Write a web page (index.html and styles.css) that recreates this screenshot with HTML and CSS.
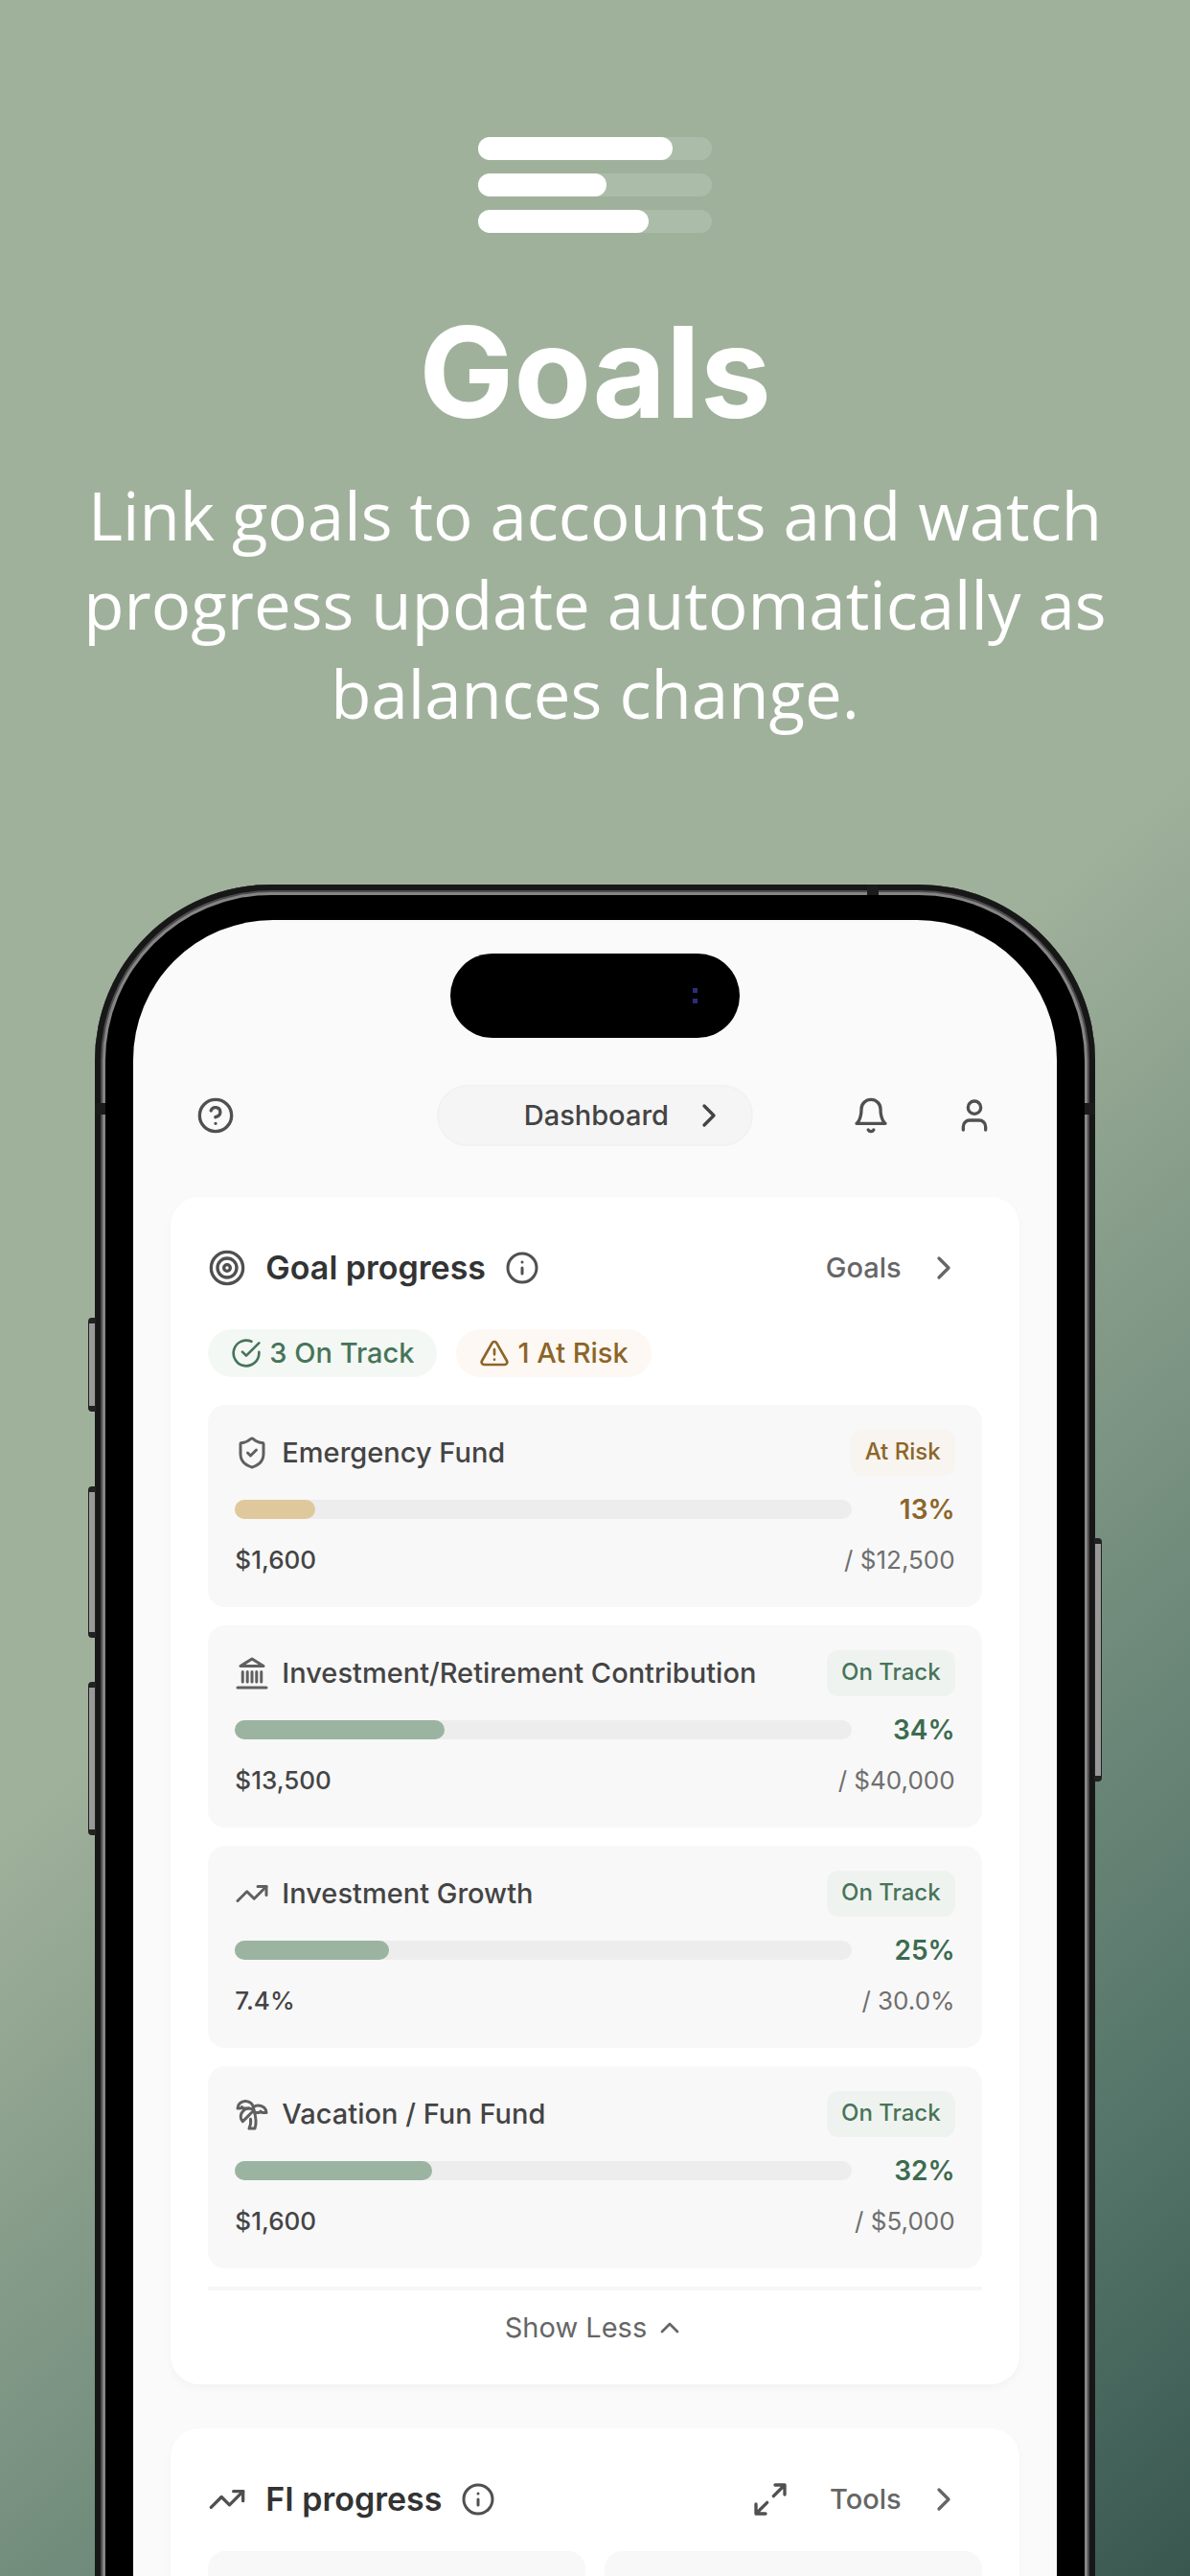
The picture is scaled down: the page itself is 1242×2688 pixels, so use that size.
FILE: index.html
```html
<!DOCTYPE html>
<html lang="en">

<head>
  <meta charset="UTF-8">
  <meta name="viewport" content="width=device-width, initial-scale=1.0">
  <title>Goals</title>
  <link rel="stylesheet" href="styles.css">
</head>

<body>
  <svg class="sprite" aria-hidden="true">
    <symbol id="chevron" viewBox="0 0 24 24"><path d="m9 18 6-6-6-6"/></symbol>
    <symbol id="info" viewBox="0 0 24 24"><circle cx="12" cy="12" r="10"/><path d="M12 16v-4M12 8h.01"/></symbol>
    <symbol id="trend" viewBox="0 0 24 24"><path d="m22 7-8.500 8.500-5-5L2 17"/><path d="M16 7h6v6"/></symbol>
  </svg>

  <header class="hero">
    <div class="logo">
      <span class="logo-bar"><span class="logo-fill long"></span></span>
      <span class="logo-bar"><span class="logo-fill short"></span></span>
      <span class="logo-bar"><span class="logo-fill medium"></span></span>
    </div>
    <h1>Goals</h1>
    <p>Link goals to accounts and watch progress update automatically as balances change.</p>
  </header>

  <div class="phone">
    <span class="side-button action"></span>
    <span class="side-button volume-up"></span>
    <span class="side-button volume-down"></span>
    <span class="side-button power"></span>
    <span class="antenna antenna-top"></span>
    <span class="antenna antenna-left"></span>
    <span class="antenna antenna-right"></span>

    <main class="screen">
      <div class="island"><span class="camera"></span></div>

      <nav class="topbar">
        <button class="icon-button" aria-label="Help">
          <svg class="icon" viewBox="0 0 24 24"><circle cx="12" cy="12" r="10"/><path d="M9.090 9a3 3 0 0 1 5.830 1c0 2-3 3-3 3M12 17h.01"/></svg>
        </button>
        <button class="page-switch">Dashboard
          <svg class="icon"><use href="#chevron"/></svg>
        </button>
        <div class="topbar-actions">
          <button class="icon-button" aria-label="Notifications">
            <svg class="icon" viewBox="0 0 24 24"><path d="M6 8a6 6 0 0 1 12 0c0 7 3 9 3 9H3s3-2 3-9"/><path d="M10.300 21a1.940 1.940 0 0 0 3.400 0"/></svg>
          </button>
          <button class="icon-button" aria-label="Profile">
            <svg class="icon" viewBox="0 0 24 24"><circle cx="12" cy="7" r="4"/><path d="M19 21v-2a4 4 0 0 0-4-4H9a4 4 0 0 0-4 4v2"/></svg>
          </button>
        </div>
      </nav>

      <section class="card">
        <div class="card-header">
          <svg class="icon muted" viewBox="0 0 24 24"><circle cx="12" cy="12" r="10"/><circle cx="12" cy="12" r="6"/><circle cx="12" cy="12" r="2"/></svg>
          <h2>Goal progress</h2>
          <button class="icon-button" aria-label="About goal progress"><svg class="icon icon-info"><use href="#info"/></svg></button>
          <a class="card-link" href="#">Goals <svg class="icon"><use href="#chevron"/></svg></a>
        </div>

        <div class="chips">
          <span class="chip track">
            <svg class="icon icon-small" viewBox="0 0 24 24"><path d="M22 11.080V12a10 10 0 1 1-5.930-9.140"/><path d="m9 11 3 3L22 4"/></svg>
            3 On Track
          </span>
          <span class="chip risk">
            <svg class="icon icon-small" viewBox="0 0 24 24"><path d="m21.730 18-8-14a2 2 0 0 0-3.480 0l-8 14A2 2 0 0 0 4 21h16a2 2 0 0 0 1.730-3"/><path d="M12 9v4M12 17h.01"/></svg>
            1 At Risk
          </span>
        </div>

        <div class="goals">
          <article class="goal risk-goal">
            <div class="goal-row goal-title">
              <svg class="icon icon-goal" viewBox="0 0 24 24"><path d="M20 13c0 5-3.500 7.500-7.660 8.950a1 1 0 0 1-.67-.01C7.500 20.500 4 18 4 13V6a1 1 0 0 1 1-1c2 0 4.500-1.200 6.240-2.720a1.170 1.170 0 0 1 1.520 0C14.510 3.810 17 5 19 5a1 1 0 0 1 1 1z"/><path d="m9 12 2 2 4-4"/></svg>
              <h3>Emergency Fund</h3>
              <span class="badge risk">At Risk</span>
            </div>
            <div class="goal-row">
              <div class="bar" role="progressbar" aria-label="Emergency Fund" aria-valuenow="13"><div class="fill" style="width: 13%"></div></div>
              <strong>13%</strong>
            </div>
            <div class="goal-row amounts"><span>$1,600</span><span class="target">/ $12,500</span></div>
          </article>

          <article class="goal">
            <div class="goal-row goal-title">
              <svg class="icon icon-goal" viewBox="0 0 24 24"><path d="M12 2 4 7h16zM2 22h20M5.500 11v7M8.800 11v7M12 11v7M15.200 11v7M18.500 11v7"/></svg>
              <h3>Investment/Retirement Contribution</h3>
              <span class="badge track">On Track</span>
            </div>
            <div class="goal-row">
              <div class="bar" role="progressbar" aria-label="Investment/Retirement Contribution" aria-valuenow="34"><div class="fill" style="width: 34%"></div></div>
              <strong>34%</strong>
            </div>
            <div class="goal-row amounts"><span>$13,500</span><span class="target">/ $40,000</span></div>
          </article>

          <article class="goal">
            <div class="goal-row goal-title">
              <svg class="icon icon-goal"><use href="#trend"/></svg>
              <h3>Investment Growth</h3>
              <span class="badge track">On Track</span>
            </div>
            <div class="goal-row">
              <div class="bar" role="progressbar" aria-label="Investment Growth" aria-valuenow="25"><div class="fill" style="width: 25%"></div></div>
              <strong>25%</strong>
            </div>
            <div class="goal-row amounts"><span>7.4%</span><span class="target">/ 30.0%</span></div>
          </article>

          <article class="goal">
            <div class="goal-row goal-title">
              <svg class="icon icon-goal" viewBox="0 0 24 24"><path d="M13 8c0-2.760-2.460-5-5.500-5S2 5.240 2 8h2l1-1 1 1h4"/><path d="M13 7.140A5.820 5.820 0 0 1 16.500 6c3.040 0 5.500 2.240 5.500 5h-3l-1-1-1 1h-3"/><path d="M5.890 9.710c-2.150 2.150-2.300 5.470-.35 7.430l4.240-4.250.7-.7.71-.71 2.120-2.120c-1.950-1.960-5.270-1.800-7.420.35"/><path d="M11 15.500c.5 2.500-.17 4.500-1 6.500h4c2-5.500-.5-12-1-14"/></svg>
              <h3>Vacation / Fun Fund</h3>
              <span class="badge track">On Track</span>
            </div>
            <div class="goal-row">
              <div class="bar" role="progressbar" aria-label="Vacation / Fun Fund" aria-valuenow="32"><div class="fill" style="width: 32%"></div></div>
              <strong>32%</strong>
            </div>
            <div class="goal-row amounts"><span>$1,600</span><span class="target">/ $5,000</span></div>
          </article>
        </div>

        <button class="show-less">Show Less
          <svg class="icon icon-small" viewBox="0 0 24 24"><path d="m18 15-6-6-6 6"/></svg>
        </button>
      </section>

      <section class="card">
        <div class="card-header">
          <svg class="icon muted"><use href="#trend"/></svg>
          <h2>FI progress</h2>
          <button class="icon-button" aria-label="About FI progress"><svg class="icon icon-info"><use href="#info"/></svg></button>
          <button class="icon-button expand" aria-label="Expand">
            <svg class="icon" viewBox="0 0 24 24"><path d="M15 3h6v6M9 21H3v-6M21 3l-7 7M3 21l7-7"/></svg>
          </button>
          <a class="card-link" href="#">Tools <svg class="icon"><use href="#chevron"/></svg></a>
        </div>
        <div class="tiles">
          <div class="tile"></div>
          <div class="tile"></div>
        </div>
      </section>
    </main>
  </div>
</body>

</html>
```

FILE: styles.css
```css
* {
  box-sizing: border-box;
}

body {
  margin: 0;
  height: 100vh;
  overflow: hidden;
  display: flex;
  flex-direction: column;
  align-items: center;
  font-family: Inter, "Liberation Sans", sans-serif;
  font-size: 29px;
  font-weight: 500;
  line-height: 36px;
  color: #444;
  background: linear-gradient(138deg, #a0b19b 50%, #738d7d 71%, #55756a 86%, #39574f 100%);
}

h1,
h2,
h3,
p {
  margin: 0;
}

button {
  padding: 0;
  border: none;
  background: none;
  font: inherit;
  color: inherit;
  cursor: pointer;
}

a {
  color: inherit;
  text-decoration: none;
}

.sprite {
  display: none;
}

.icon {
  display: block;
  flex: none;
  width: 40px;
  height: 40px;
  fill: none;
  stroke: currentColor;
  stroke-width: 2;
  stroke-linecap: round;
  stroke-linejoin: round;
}

.icon-info,
.icon-goal {
  width: 36px;
  height: 36px;
}

.icon-small {
  width: 32px;
  height: 32px;
}

.icon-button,
.muted {
  color: #505050;
}

/* heading */
.hero {
  flex: none;
  padding: 143px 72px 0;
  text-align: center;
  color: #fff;
}

.logo {
  display: grid;
  gap: 14px;
  width: 244px;
  margin: 0 auto;
}

.logo-bar {
  height: 24px;
  border-radius: 12px;
  background: #abbca9;
}

.logo-fill {
  display: block;
  height: 100%;
  border-radius: 12px;
  background: #fff;
}

.long {
  width: 83%;
}

.short {
  width: 55%;
}

.medium {
  width: 73%;
}

.hero h1 {
  margin-top: 70px;
  font-size: 132px;
  font-weight: 700;
  line-height: 150px;
}

.hero p {
  margin-top: 28px;
  font-family: "Open Sans", "Noto Sans", sans-serif;
  font-size: 69px;
  font-weight: 400;
  line-height: 93px;
}

/* phone */
.phone {
  position: relative;
  flex: none;
  width: 84%;
  margin-top: 153px;
  padding: 37px 40px 0;
  border-radius: 184px 184px 0 0;
  background: #000;
  box-shadow: inset 0 0 0 6px #171717, inset 0 0 0 8px #4c4c4c, inset 0 0 0 11px #858585;
}

.side-button {
  position: absolute;
  left: -7px;
  width: 8px;
  border: 1px solid #222;
  border-width: 6px 1px;
  border-radius: 4px 0 0 4px;
  background: #999;
}

.action {
  top: 452px;
  height: 98px;
}

.volume-up {
  top: 628px;
  height: 158px;
}

.volume-down {
  top: 832px;
  height: 160px;
}

.power {
  left: auto;
  right: -7px;
  top: 682px;
  height: 254px;
  border-radius: 0 4px 4px 0;
}

.antenna {
  position: absolute;
  width: 11px;
  height: 12px;
  background: #1b1b1b;
}

.antenna-top {
  top: 0;
  right: 226px;
  width: 12px;
  height: 11px;
}

.antenna-left {
  top: 228px;
  left: 0;
}

.antenna-right {
  top: 228px;
  right: 0;
}

.screen {
  padding: 35px 39px 0;
  border-radius: 146px 146px 0 0;
  background: #fafafa;
}

.island {
  display: flex;
  align-items: center;
  justify-content: flex-end;
  width: 302px;
  height: 88px;
  margin: 0 auto;
  padding-right: 44px;
  border-radius: 44px;
  background: #000;
}

.camera {
  width: 5px;
  height: 16px;
  border: 0 solid #2f2b7c;
  border-width: 5px 0;
}

.topbar {
  display: grid;
  grid-template-columns: 1fr auto 1fr;
  align-items: center;
  margin: 49px 27px 53px;
}

.page-switch {
  display: flex;
  align-items: center;
  justify-content: flex-end;
  gap: 22px;
  width: 330px;
  height: 64px;
  padding-right: 24px;
  border: 2px solid #f2f2f2;
  border-radius: 32px;
  background: #f5f5f5;
}

.topbar-actions {
  display: flex;
  justify-content: flex-end;
  gap: 68px;
}

/* cards */
.card {
  margin-bottom: 46px;
  padding: 46px 39px 26px;
  border-radius: 30px;
  background: #fff;
  box-shadow: 0 4px 8px rgba(0, 0, 0, 0.03);
}

.card-header {
  display: flex;
  align-items: center;
  gap: 20px;
  height: 56px;
}

.card-header h2 {
  font-size: 34px;
  font-weight: 600;
  line-height: 40px;
  color: #333;
}

.card-link {
  display: flex;
  align-items: center;
  gap: 24px;
  margin-left: auto;
  padding-right: 20px;
  color: #666;
}

.expand {
  margin-left: auto;
}

.expand + .card-link {
  margin-left: 22px;
}

.chips {
  display: flex;
  gap: 20px;
  margin-top: 36px;
}

.chip {
  display: flex;
  align-items: center;
  gap: 8px;
  height: 50px;
  padding: 0 24px;
  border-radius: 25px;
}

.track {
  color: #47745a;
  background: #f4f8f4;
}

.risk {
  color: #8c6529;
  background: #fdf8f3;
}

.goals {
  display: grid;
  gap: 19px;
  margin-top: 29px;
}

.goal {
  display: grid;
  gap: 17px;
  padding: 26px 28px 31px;
  border-radius: 18px;
  background: #f8f8f8;
}

.goal-row {
  display: flex;
  align-items: center;
  justify-content: space-between;
}

.goal-title {
  gap: 13px;
  color: #606060;
}

.goal-title h3 {
  flex: 1;
  font-size: 29px;
  font-weight: 500;
  color: #444;
  white-space: nowrap;
}

.badge {
  height: 48px;
  padding: 0 15px;
  border-radius: 12px;
  font-size: 24px;
  line-height: 46px;
}

.badge.track {
  background: #eff3ef;
}

.badge.risk {
  background: #f8f4ef;
}

.bar {
  flex: 1;
  height: 20px;
  border-radius: 10px;
  background: #ededed;
}

.fill {
  height: 100%;
  border-radius: 10px;
  background: #9bb4a1;
}

.risk-goal .fill {
  background: #dfc89b;
}

.goal-row strong {
  width: 108px;
  font-size: 28px;
  font-weight: 600;
  text-align: right;
  color: #3c6b4f;
}

.risk-goal strong {
  color: #8c6529;
}

.amounts {
  font-size: 26px;
}

.target {
  font-weight: 400;
  color: #6f6f6f;
}

.show-less {
  display: flex;
  align-items: center;
  justify-content: center;
  gap: 8px;
  width: 100%;
  height: 76px;
  margin-top: 19px;
  padding-top: 6px;
  border-top: 4px solid #f7f7f7;
  font-weight: 400;
  color: #666;
}

.tiles {
  display: grid;
  grid-template-columns: 1fr 1fr;
  gap: 20px;
  margin-top: 26px;
}

.tile {
  min-height: 160px;
  border-radius: 18px;
  background: #f8f8f8;
}
```
